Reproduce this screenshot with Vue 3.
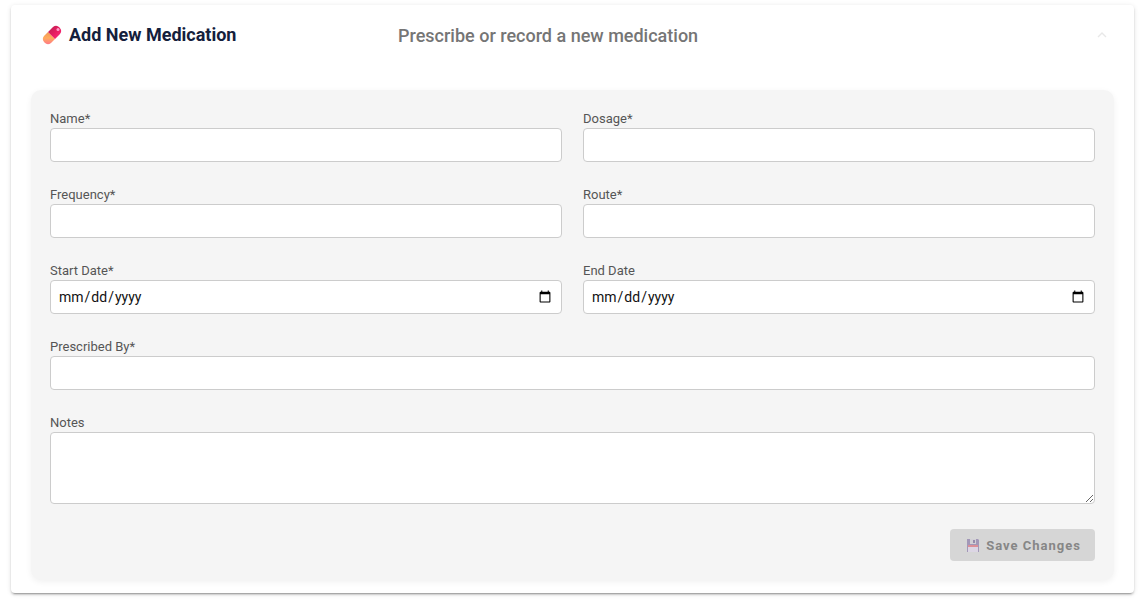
<script setup>
import { ref } from 'vue'

const open = ref(true)
const fields = [
  { id: 'name', label: 'Name*', type: 'text' },
  { id: 'dosage', label: 'Dosage*', type: 'text' },
  { id: 'frequency', label: 'Frequency*', type: 'text' },
  { id: 'route', label: 'Route*', type: 'text' },
  { id: 'start', label: 'Start Date*', type: 'date' },
  { id: 'end', label: 'End Date', type: 'date' },
  { id: 'prescriber', label: 'Prescribed By*', type: 'text', wide: true },
]
</script>

<template>
  <section class="card">
    <button class="header" type="button" :aria-expanded="open" @click="open = !open">
      <span class="title">
        <svg class="pill" viewBox="0 0 20 20" aria-hidden="true">
          <defs>
            <linearGradient id="pill-red" x1="0" y1="0" x2="1" y2="1">
              <stop offset="0" stop-color="#b82050" />
              <stop offset="0.55" stop-color="#e91e63" />
              <stop offset="1" stop-color="#ff2f7d" />
            </linearGradient>
            <linearGradient id="pill-orange" x1="0" y1="0" x2="0" y2="1">
              <stop offset="0" stop-color="#f09a55" />
              <stop offset="0.5" stop-color="#ffab5e" />
              <stop offset="1" stop-color="#ff7b86" />
            </linearGradient>
          </defs>
          <path d="M6 7l7 7-4 4a5 5 0 0 1-7-7z" fill="url(#pill-orange)" />
          <path d="M6 7l5-5a5 5 0 0 1 7 7l-5 5z" fill="url(#pill-red)" />
          <circle cx="16" cy="4.6" r="1.5" fill="#ffa0c8" />
        </svg>
        <span>Add New Medication</span>
      </span>
      <span class="subtitle">Prescribe or record a new medication</span>
      <svg class="chevron" viewBox="0 0 10 6" aria-hidden="true">
        <path d="M1 5l4-4 4 4" fill="none" stroke="#e8e8e8" stroke-width="1.4" />
      </svg>
    </button>

    <form v-show="open" class="panel" @submit.prevent>
      <div v-for="f in fields" :key="f.id" class="field" :class="{ wide: f.wide }">
        <label :for="f.id">{{ f.label }}</label>
        <input :id="f.id" :type="f.type" />
      </div>
      <div class="field wide">
        <label for="notes">Notes</label>
        <textarea id="notes"></textarea>
      </div>
      <div class="actions wide">
        <button class="save" type="submit" disabled>
          <svg class="disk" viewBox="0 0 12 13" aria-hidden="true">
            <path d="M0 0h11l1 1v12H0z" fill="#a298b8" />
            <path d="M3 0h6v5H3z" fill="#d2d0d6" />
            <path d="M6 1h2v3H6z" fill="#958bab" />
            <path d="M1 7h10v6H1z" fill="#dcd6e4" />
            <path d="M1 6h10v2H1z" fill="#dc8f98" />
          </svg>
          <span>Save Changes</span>
        </button>
      </div>
    </form>
  </section>
</template>

<style>
body {
  background: #fff;
}
</style>

<style scoped>
.card {
  box-sizing: border-box;
  margin: 5px 6px 6px 11px;
  padding-bottom: 13px;
  border-radius: 4px;
  background: #fff;
  box-shadow: 0 3px 1px -2px rgba(0, 0, 0, 0.2), 0 2px 2px rgba(0, 0, 0, 0.14),
    0 1px 5px rgba(0, 0, 0, 0.12);
  font-family: Roboto, sans-serif;
  display: flow-root;
}
.header {
  display: grid;
  grid-template-columns: 356px 1fr 10px;
  align-items: center;
  width: 100%;
  height: 60px;
  margin-bottom: 25px;
  padding: 0 27px 0 31px;
  border: 0;
  background: none;
  font-family: inherit;
  font-size: 18px;
  line-height: 24px;
  text-align: left;
}
.title {
  display: flex;
  align-items: center;
  gap: 7px;
  color: #14203c;
  font-weight: 700;
}
.pill {
  width: 20px;
  height: 20px;
}
.subtitle {
  padding-top: 2px;
  color: #757575;
  font-weight: 500;
}
.chevron {
  width: 10px;
  height: 6px;
}
.panel {
  display: grid;
  grid-template-columns: 1fr 1fr;
  gap: 24px 21px;
  margin: 0 20px;
  padding: 20px 19px 19px;
  border-radius: 10px;
  background: #f5f5f5;
  box-shadow: 0 2px 6px rgba(0, 0, 0, 0.06);
}
.wide {
  grid-column: 1 / -1;
}
.field {
  display: flex;
  flex-direction: column;
}
label {
  color: #555;
  font-size: 13px;
  line-height: 18px;
}
input,
textarea {
  box-sizing: border-box;
  width: 100%;
  border: 1px solid #ccc;
  border-radius: 4px;
  background: #fff;
  color: #111;
  font-family: inherit;
  font-size: 14px;
  padding: 0 7px;
}
input {
  height: 34px;
}
textarea {
  display: block;
  height: 72px;
  resize: vertical;
}
.actions {
  display: flex;
  justify-content: flex-end;
  padding-top: 1px;
}
.save {
  display: flex;
  align-items: center;
  gap: 7px;
  height: 32px;
  padding: 0 14px 0 17px;
  border: 0;
  border-radius: 4px;
  background: #d6d6d6;
  color: #868686;
  font-family: inherit;
  font-size: 13px;
  font-weight: 700;
  letter-spacing: 1px;
}
.disk {
  width: 12px;
  height: 13px;
}
</style>
